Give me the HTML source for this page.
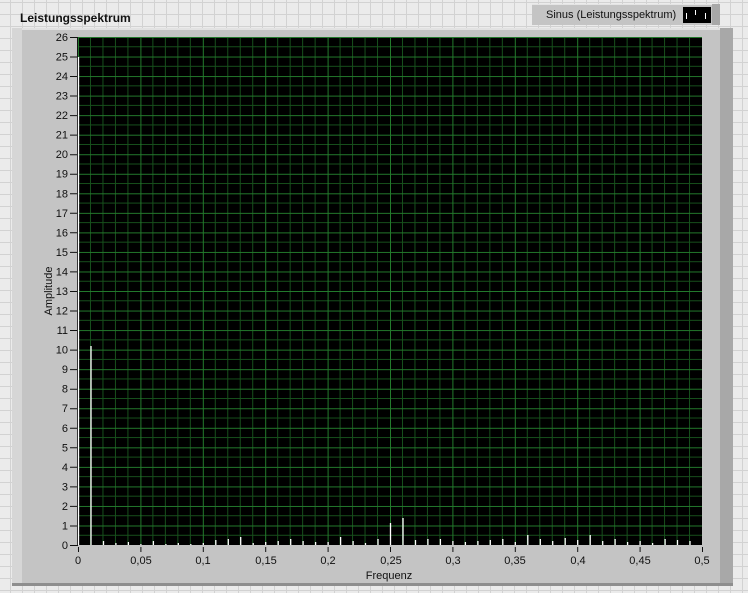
<!DOCTYPE html>
<html><head><meta charset="utf-8"><style>
html,body{margin:0;padding:0}
body{width:748px;height:593px;overflow:hidden;background-color:#ebebeb;
background-image:linear-gradient(#d2d2d2 1px,transparent 1px),linear-gradient(90deg,#d2d2d2 1px,transparent 1px);
background-size:12px 12px;background-position:-2px 2px;font-family:"Liberation Sans",Arial,sans-serif;position:relative}
</style></head><body>
<svg width="748" height="593" style="position:absolute;left:0;top:0" font-family="Liberation Sans, Arial, sans-serif">
<defs>
<pattern id="g" x="78" y="37" width="62.4" height="19.54" patternUnits="userSpaceOnUse">
<rect width="62.4" height="19.54" fill="#000"/>
<g stroke="#17501c" stroke-width="1">
<line x1="12.48" y1="0" x2="12.48" y2="19.54"/><line x1="24.96" y1="0" x2="24.96" y2="19.54"/>
<line x1="37.44" y1="0" x2="37.44" y2="19.54"/><line x1="49.92" y1="0" x2="49.92" y2="19.54"/>
<line x1="0" y1="9.77" x2="62.4" y2="9.77"/>
</g>
<g stroke="#237a2c" stroke-width="1"><line x1="0.5" y1="0" x2="0.5" y2="19.54"/><line x1="0" y1="0.5" x2="62.4" y2="0.5"/></g>
</pattern>
</defs>
<text x="20" y="22" font-size="12" font-weight="bold" fill="#111">Leistungsspektrum</text>
<rect x="12" y="28" width="721" height="558" fill="#c4c4c4"/>
<rect x="12" y="28" width="721" height="2" fill="#e2e2e2"/>
<rect x="12" y="28" width="10" height="558" fill="#d6d6d6"/>
<rect x="720" y="28" width="13" height="558" fill="#a8a8a8"/>
<rect x="12" y="583" width="721" height="3" fill="#8e8e8e"/>
<rect x="532" y="4" width="188" height="21" fill="#c4c4c4"/>
<rect x="532" y="4" width="188" height="1" fill="#e4e4e4"/>
<rect x="712" y="4" width="8" height="21" fill="#a8a8a8"/>
<text x="546" y="18" font-size="11" fill="#111">Sinus (Leistungsspektrum)</text>
<rect x="683" y="7" width="28" height="16" fill="#000"/>
<g stroke="#fff"><line x1="686.5" y1="13" x2="686.5" y2="19"/><line x1="695.5" y1="10" x2="695.5" y2="15"/><line x1="705.5" y1="13" x2="705.5" y2="19"/></g>
<rect x="78" y="37" width="624" height="508" fill="url(#g)"/>
<g stroke="#111" stroke-width="1">
<line x1="77.5" y1="37" x2="77.5" y2="546"/>
</g>
<g font-size="11" fill="#111" text-anchor="end">
<text x="68" y="549">0</text><text x="68" y="529.5">1</text><text x="68" y="510">2</text><text x="68" y="490.4">3</text><text x="68" y="470.8">4</text><text x="68" y="451.3">5</text><text x="68" y="431.8">6</text><text x="68" y="412.2">7</text><text x="68" y="392.7">8</text><text x="68" y="373.1">9</text><text x="68" y="353.6">10</text><text x="68" y="334">11</text><text x="68" y="314.5">12</text><text x="68" y="295">13</text><text x="68" y="275.4">14</text><text x="68" y="255.9">15</text><text x="68" y="236.4">16</text><text x="68" y="216.8">17</text><text x="68" y="197.3">18</text><text x="68" y="177.7">19</text><text x="68" y="158.2">20</text><text x="68" y="138.6">21</text><text x="68" y="119.1">22</text><text x="68" y="99.6">23</text><text x="68" y="80">24</text><text x="68" y="60.5">25</text><text x="68" y="41">26</text>
</g>
<g stroke="#111">
<path d="M70 545.5h7M70 526h7M70 506.4h7M70 486.9h7M70 467.3h7M70 447.8h7M70 428.3h7M70 408.7h7M70 389.2h7M70 369.6h7M70 350.1h7M70 330.5h7M70 311h7M70 291.5h7M70 271.9h7M70 252.4h7M70 232.8h7M70 213.3h7M70 193.7h7M70 174.2h7M70 154.7h7M70 135.1h7M70 115.6h7M70 96h7M70 76.5h7M70 57h7M70 37.5h7"/>
<path d="M78.5 547v5M140.9 547v5M203.3 547v5M265.7 547v5M328.1 547v5M390.5 547v5M452.9 547v5M515.3 547v5M577.7 547v5M640.1 547v5M702.5 547v5"/>
</g>
<g font-size="11" fill="#111" text-anchor="middle">
<text x="78" y="564">0</text><text x="141" y="564">0,05</text><text x="203" y="564">0,1</text><text x="266" y="564">0,15</text><text x="328" y="564">0,2</text><text x="391" y="564">0,25</text><text x="453" y="564">0,3</text><text x="515" y="564">0,35</text><text x="578" y="564">0,4</text><text x="640" y="564">0,45</text><text x="702" y="564">0,5</text>
<text x="389" y="579">Frequenz</text>
<text transform="translate(52,291) rotate(-90)">Amplitude</text>
</g>
<g stroke="#fff" stroke-width="1.3">
<path d="M78.5 545V57M91 545V346M103.5 545v-4M115.9 545v-2M128.4 545v-3M140.9 545v-1M153.4 545v-4M165.9 545v-1M178.3 545v-2M190.8 545v-1M203.3 545v-2M215.8 545v-5M228.3 545v-6M240.7 545v-8M253.2 545v-2M265.7 545v-3M278.2 545v-4M290.7 545v-6M303.1 545v-4M315.6 545v-3M328.1 545v-3M340.6 545v-8M353.1 545v-4M365.5 545v-2M378 545v-6M390.5 545v-22M403 545v-27M415.5 545v-5M427.9 545v-6M440.4 545v-6M452.9 545v-4M465.4 545v-3M477.9 545v-4M490.3 545v-5M502.8 545v-6M515.3 545v-3M527.8 545v-10M540.3 545v-6M552.7 545v-4M565.2 545v-7M577.7 545v-5M590.2 545v-10M602.7 545v-4M615.1 545v-6M627.6 545v-3M640.1 545v-4M652.6 545v-2M665.1 545v-6M677.5 545v-5M690 545v-4"/>
</g>
</svg>
</body></html>
